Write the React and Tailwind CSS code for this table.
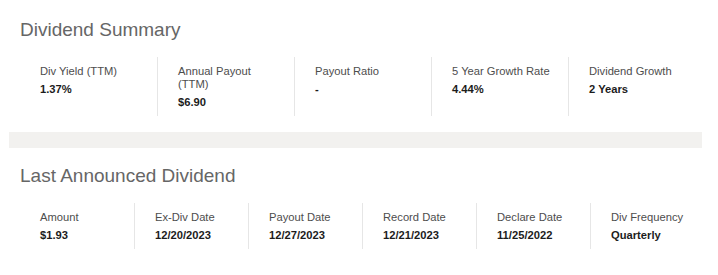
import React from 'react';

const summary = [
    { label: 'Div Yield (TTM)', value: '1.37%' },
    { label: 'Annual Payout (TTM)', value: '$6.90' },
    { label: 'Payout Ratio', value: '-' },
    { label: '5 Year Growth Rate', value: '4.44%' },
    { label: 'Dividend Growth', value: '2 Years' },
];

const lastDividend = [
    { label: 'Amount', value: '$1.93' },
    { label: 'Ex-Div Date', value: '12/20/2023' },
    { label: 'Payout Date', value: '12/27/2023' },
    { label: 'Record Date', value: '12/21/2023' },
    { label: 'Declare Date', value: '11/25/2022' },
    { label: 'Div Frequency', value: 'Quarterly' },
];

function Stat({ label, value, first }) {
    return (
        <div className={`pl-5 pr-4 pt-[8px] pb-[7px] ${first ? '' : 'border-l border-[#e6e6e6]'}`}>
            <div className="text-[11.2px] leading-[13px] text-[#4d4d4d]">{label}</div>
            <div className="mt-[5px] text-[11.2px] leading-[13px] font-bold text-[#1c1c1c]">{value}</div>
        </div>
    );
}

export default function App() {
    return (
        <div className="w-[718px] h-[275px] bg-white overflow-hidden font-['Liberation_Sans',Arial,sans-serif]">
            {/* Dividend Summary */}
            <div className="pt-[19px]">
                <h2 className="ml-5 text-[19px] leading-[22px] text-[#666666]">Dividend Summary</h2>
                <div className="ml-5 mt-4 grid grid-cols-[repeat(5,137px)]">
                    {summary.map((s, i) => (
                        <Stat key={s.label} label={s.label} value={s.value} first={i === 0} />
                    ))}
                </div>
            </div>

            {/* separator band */}
            <div className="ml-[9px] mt-4 w-[693px] h-[16px] bg-[#f2f1ef]" />

            {/* Last Announced Dividend */}
            <div className="pt-[17px]">
                <h2 className="ml-5 text-[19px] leading-[22px] text-[#666666]">Last Announced Dividend</h2>
                <div className="ml-5 mt-4 grid grid-cols-[repeat(6,114px)]">
                    {lastDividend.map((s, i) => (
                        <Stat key={s.label} label={s.label} value={s.value} first={i === 0} />
                    ))}
                </div>
            </div>
        </div>
    );
}
